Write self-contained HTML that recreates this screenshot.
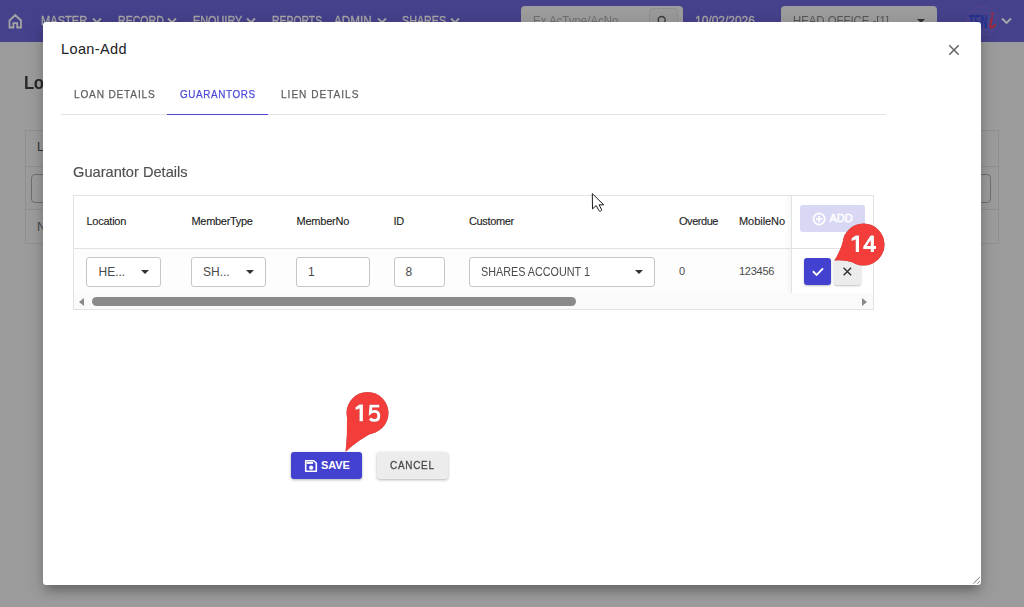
<!DOCTYPE html>
<html><head><meta charset="utf-8">
<style>
*{box-sizing:border-box;margin:0;padding:0}
html,body{width:1024px;height:607px;overflow:hidden;font-family:"Liberation Sans",sans-serif;background:#9b9b9b;position:relative}
div,span,svg{position:absolute}
.t{line-height:1;white-space:nowrap}
#hdr{left:0;top:0;width:1024px;height:42px;background:#45418b}
.menu{color:#a6a6a6;font-size:13px;top:14.2px;-webkit-text-stroke:.35px currentColor;transform-origin:0 0}
.chev{top:17px;width:10px;height:7px}
#modal{left:43px;top:22px;width:938px;height:563px;background:#fff;border-radius:3px;box-shadow:0 8px 10px -3px rgba(0,0,0,.25),0 4px 16px 1px rgba(0,0,0,.14)}
.tab{top:88.5px;font-size:11.5px;color:#5e5e5e;-webkit-text-stroke:.25px currentColor;transform-origin:0 0}
.hd{font-size:11px;color:#1e1e1e;top:215.6px;letter-spacing:-.25px;-webkit-text-stroke:.12px #1e1e1e}
.inp{border:1px solid #c6c6c6;border-radius:3px;height:29.5px;top:257px;background:#fff}
.it{font-size:12px;color:#4a4a4a;top:265.5px}
.caret{width:0;height:0;border-left:4px solid transparent;border-right:4px solid transparent;border-top:4px solid #333;top:270px}
.btn{border-radius:3px}
</style></head><body>
<!-- background page -->
<div id="hdr"></div>
<svg style="left:8px;top:13px" width="15" height="16" viewBox="0 0 15 16"><path d="M1.5 7.5 L7.2 2 L13 7.5 V14.5 H9.2 V10.2 H5.4 V14.5 H1.5 Z" fill="none" stroke="#a4a4a4" stroke-width="1.8" stroke-linejoin="miter"/></svg>
<div class="t menu" style="left:41.4px;transform:scaleX(.853)">MASTER</div>
<svg class="chev" style="left:92px" viewBox="0 0 10 7"><path d="M1 1.5 L5 5.5 L9 1.5" fill="none" stroke="#a6a6a6" stroke-width="1.8"/></svg>
<div class="t menu" style="left:117.7px;transform:scaleX(.815)">RECORD</div>
<svg class="chev" style="left:167px" viewBox="0 0 10 7"><path d="M1 1.5 L5 5.5 L9 1.5" fill="none" stroke="#a6a6a6" stroke-width="1.8"/></svg>
<div class="t menu" style="left:192.8px;transform:scaleX(.835)">ENQUIRY</div>
<svg class="chev" style="left:246px" viewBox="0 0 10 7"><path d="M1 1.5 L5 5.5 L9 1.5" fill="none" stroke="#a6a6a6" stroke-width="1.8"/></svg>
<div class="t menu" style="left:271.8px;transform:scaleX(.8)">REPORTS</div>
<div class="t menu" style="left:334.3px;transform:scaleX(.9)">ADMIN</div>
<svg class="chev" style="left:376.5px" viewBox="0 0 10 7"><path d="M1 1.5 L5 5.5 L9 1.5" fill="none" stroke="#a6a6a6" stroke-width="1.8"/></svg>
<div class="t menu" style="left:401.5px;transform:scaleX(.827)">SHARES</div>
<svg class="chev" style="left:450px" viewBox="0 0 10 7"><path d="M1 1.5 L5 5.5 L9 1.5" fill="none" stroke="#a6a6a6" stroke-width="1.8"/></svg>
<!-- search -->
<div style="left:521px;top:6px;width:162px;height:30px;background:#9c9c9c;border-radius:4px"></div>
<div class="t" style="left:532.5px;top:14.2px;font-size:13px;color:#6f6f6f;transform:scaleX(.883);transform-origin:0 0">Ex AcType/AcNo</div>
<div style="left:649.3px;top:7.6px;width:28.5px;height:26px;background:#999;border:1px solid #8e8e8e;border-radius:4px"></div>
<svg style="left:657px;top:13px" width="14" height="14" viewBox="0 0 14 14"><circle cx="4.7" cy="7" r="3.5" fill="none" stroke="#3a3a3a" stroke-width="1.4"/></svg>
<div class="t menu" style="left:695px;transform:scaleX(.921)">10/02/2026</div>
<div style="left:781px;top:6px;width:156px;height:30px;background:#9c9c9c;border-radius:4px"></div>
<div class="t" style="left:793.2px;top:14.2px;font-size:13px;color:#555;transform:scaleX(.874);transform-origin:0 0">HEAD OFFICE -[1]</div>
<div style="left:917px;top:19px;width:0;height:0;border-left:4px solid transparent;border-right:4px solid transparent;border-top:4px solid #333"></div>
<!-- logo -->
<svg style="left:966px;top:5px" width="32" height="32" viewBox="966 5 32 32">
<circle cx="982" cy="21" r="14.8" fill="none" stroke="#7a4a80" stroke-width=".6" opacity=".5"/>
<path d="M970 12 H994 M968.5 16 H995.5 M968 21 H996 M968.5 26 H995.5 M970 30 H994 M975 8 H989 M975 34 H989" stroke="#5e5ca4" stroke-width=".7" stroke-dasharray="1 .9" opacity=".7"/>
<text x="968.6" y="28.4" font-family="Liberation Sans" font-weight="bold" font-size="18.5" fill="#22308e" textLength="18.8" lengthAdjust="spacingAndGlyphs">TEN</text>
<circle cx="992.3" cy="14" r="1.3" fill="#ad262e"/>
<path d="M992.2 17.5 Q991 22 990.3 25.5 Q990 28.5 992 27.5 Q994 26.2 995 24.8" fill="none" stroke="#ad262e" stroke-width="1.7" stroke-linecap="round"/>
</svg>
<svg style="left:1001px;top:17px" width="11" height="8" viewBox="0 0 11 8"><path d="M1 1.5 L5.5 6 L10 1.5" fill="none" stroke="#a8a8a8" stroke-width="1.8"/></svg>

<div class="t" style="left:24.3px;top:72.8px;font-size:19px;font-weight:bold;color:#282828;letter-spacing:-.4px;transform:scaleX(.88);transform-origin:0 0">Lo</div>
<div style="left:24.5px;top:130px;width:974px;height:114px;border:1px solid #8f8f8f"></div>
<div style="left:25px;top:166px;width:973px;height:1px;background:#8f8f8f"></div>
<div style="left:25px;top:209px;width:973px;height:1px;background:#8f8f8f"></div>
<div style="left:31px;top:173.5px;width:960px;height:29px;border:1px solid #6e6e6e;border-radius:4px"></div>
<div class="t" style="left:37px;top:140.8px;font-size:12.5px;color:#333">L</div>
<div class="t" style="left:37px;top:220.8px;font-size:12.5px;color:#444">N</div>

<!-- modal -->
<div id="modal"></div>
<div class="t" style="left:61px;top:41.5px;font-size:14.5px;color:#212121;letter-spacing:.38px">Loan-Add</div>
<svg style="left:944.6px;top:41px" width="18" height="18" viewBox="0 0 24 24"><path d="M19 6.41L17.59 5 12 10.59 6.41 5 5 6.41 10.59 12 5 17.59 6.41 19 12 13.41 17.59 19 19 17.59 13.41 12z" fill="#666"/></svg>
<div class="t tab" style="left:73.5px;transform:scaleX(.88);letter-spacing:.92px">LOAN DETAILS</div>
<div class="t tab" style="left:179.5px;transform:scaleX(.86);letter-spacing:.72px;color:#4b49d6">GUARANTORS</div>
<div class="t tab" style="left:280.5px;transform:scaleX(.88);letter-spacing:1.1px">LIEN DETAILS</div>
<div style="left:61px;top:114px;width:825px;height:1px;background:#e2e2e2"></div>
<div style="left:167px;top:113.6px;width:101px;height:1.6px;background:#4744d2"></div>
<div class="t" style="left:73.3px;top:164px;font-size:15px;color:#4f4f4f;-webkit-text-stroke:.15px #4f4f4f;transform:scaleX(.975);transform-origin:0 0">Guarantor Details</div>

<!-- table -->
<div style="left:73px;top:195px;width:801px;height:115px;border:1px solid #e2e2e2"></div>
<div style="left:74px;top:248px;width:717px;height:1px;background:#e2e2e2"></div>
<div style="left:791px;top:248px;width:82px;height:1px;background:#e2e2e2"></div>
<div style="left:74px;top:249px;width:717px;height:44px;background:#fdfdfd"></div>
<div style="left:791px;top:196px;width:1px;height:97px;background:#e2e2e2"></div>
<div style="left:785px;top:196px;width:6px;height:97px;background:linear-gradient(to right,rgba(0,0,0,0),rgba(0,0,0,.03))"></div>
<div class="t hd" style="left:86.5px">Location</div>
<div class="t hd" style="left:191.5px;letter-spacing:-.3px">MemberType</div>
<div class="t hd" style="left:296.5px;letter-spacing:-.23px">MemberNo</div>
<div class="t hd" style="left:393.5px">ID</div>
<div class="t hd" style="left:469px;letter-spacing:-.35px">Customer</div>
<div class="t hd" style="left:679px;letter-spacing:-.45px">Overdue</div>
<div class="t hd" style="left:739px;letter-spacing:-.05px">MobileNo</div>

<div class="inp" style="left:86px;width:74.5px"></div>
<div class="t it" style="left:98.5px">HE...</div>
<div class="caret" style="left:141px"></div>
<div class="inp" style="left:191px;width:74.5px"></div>
<div class="t it" style="left:203px">SH...</div>
<div class="caret" style="left:246px"></div>
<div class="inp" style="left:296px;width:74px"></div>
<div class="t it" style="left:308px">1</div>
<div class="inp" style="left:394px;width:50.5px"></div>
<div class="t it" style="left:405.5px">8</div>
<div class="inp" style="left:469px;width:186px"></div>
<div class="t it" style="left:481px;transform:scaleX(.9);transform-origin:0 0">SHARES ACCOUNT 1</div>
<div class="caret" style="left:635px"></div>
<div class="t it" style="left:679px;font-size:11px;top:266px">0</div>
<div class="t it" style="left:739px;font-size:11px;top:266px;letter-spacing:-.25px">123456</div>

<!-- add button -->
<div class="btn" style="left:800px;top:205px;width:65px;height:27px;background:#d9d8f4"></div>
<svg style="left:811.5px;top:211.5px" width="14" height="14" viewBox="0 0 14 14"><circle cx="7.1" cy="7" r="5.6" fill="none" stroke="#fff" stroke-width="1.7"/><path d="M7.1 3.9 V10.1 M4 7 H10.2" stroke="#fff" stroke-width="1.6"/></svg>
<div class="t" style="left:829.4px;top:212.6px;font-size:11px;color:#fff;-webkit-text-stroke:.5px #fff;letter-spacing:.1px">ADD</div>
<!-- row buttons -->
<div class="btn" style="left:804px;top:258px;width:27px;height:27px;background:#4341d0;box-shadow:0 1px 2px rgba(0,0,0,.25)"></div>
<div class="btn" style="left:834px;top:258px;width:27px;height:27px;background:#ececec;box-shadow:0 1px 2px rgba(0,0,0,.25)"></div>
<svg style="left:800px;top:254px" width="66" height="36" viewBox="800 254 66 36"><path d="M812.9 271.3 L816.6 274.9 L823 268.3" fill="none" stroke="#fff" stroke-width="1.9"/><path d="M843.6 267.7 L851.1 275.2 M851.1 267.7 L843.6 275.2" stroke="#333" stroke-width="1.45"/></svg>


<!-- scrollbar -->
<div style="left:74px;top:293px;width:799px;height:16px;background:#fafafa"></div>
<div style="left:92px;top:297px;width:484px;height:9px;background:#8a8a8a;border-radius:5px"></div>
<div style="left:79px;top:297.5px;width:0;height:0;border-top:4.5px solid transparent;border-bottom:4.5px solid transparent;border-right:5px solid #8a8a8a"></div>
<div style="left:862px;top:297.5px;width:0;height:0;border-top:4.5px solid transparent;border-bottom:4.5px solid transparent;border-left:5px solid #8a8a8a"></div>

<!-- badge 14 -->
<svg style="left:825px;top:215px;filter:drop-shadow(.8px .8px .5px rgba(0,0,0,.45))" width="70" height="60" viewBox="825 215 70 60">
<path d="M834.5 260.5 Q842 248 845 234 L855 263 Q845 259.5 834.5 260.5 Z" fill="#f23d3b"/>
<circle cx="863.5" cy="244.5" r="21" fill="#f23d3b"/>
</svg>
<svg style="left:845px;top:230px;filter:drop-shadow(.4px .9px .5px rgba(0,0,0,.4))" width="36" height="26" viewBox="845 230 36 26"><path d="M855.7 235.4 H859 V252 H855.7 V239.4 L851.6 240.9 V238.2 Z" fill="#fff"/><path d="M870.6 235.4 H873.9 V246 H876 V249 H873.9 V252 H870.7 V249 H863.2 V246.7 Z M870.7 240.2 L866.8 246 H870.7 Z" fill="#fff" fill-rule="evenodd"/></svg>

<!-- save / cancel -->
<div class="btn" style="left:291px;top:452px;width:71px;height:27px;background:#4341d0;box-shadow:0 1px 3px rgba(0,0,0,.3)"></div>
<svg style="left:303.6px;top:458.6px" width="14" height="14" viewBox="0 0 14 14"><path d="M1.7 1.7 H9.8 L12.3 4.2 V12.3 H1.7 Z" fill="none" stroke="#fff" stroke-width="1.6" stroke-linejoin="round"/><rect x="2.5" y="3" width="6.6" height="1.9" fill="#fff"/><circle cx="7.2" cy="8.7" r="2.1" fill="#fff"/></svg>
<div class="t" style="left:321px;top:460px;font-size:11px;font-weight:bold;color:#fff;letter-spacing:-.13px">SAVE</div>
<div class="btn" style="left:376.5px;top:452px;width:71px;height:27px;background:#ececec;box-shadow:0 1px 3px rgba(0,0,0,.3)"></div>
<div class="t" style="left:389.8px;top:460.1px;font-size:11px;color:#484848;-webkit-text-stroke:.3px #484848;transform:scaleX(.9);transform-origin:0 0;letter-spacing:.85px">CANCEL</div>

<!-- badge 15 -->
<svg style="left:335px;top:385px;filter:drop-shadow(.8px .8px .5px rgba(0,0,0,.45))" width="65" height="70" viewBox="335 385 65 70">
<path d="M345.6 451.7 Q347.5 435 347 418 L374 432 Q358 440 345.6 451.7 Z" fill="#f23d3b"/>
<circle cx="367.5" cy="413" r="21" fill="#f23d3b"/>
</svg>
<svg style="left:350px;top:400px;filter:drop-shadow(.4px .9px .5px rgba(0,0,0,.4))" width="36" height="26" viewBox="350 400 36 26"><path d="M359.5 404.5 H362.9 V421.3 H359.5 V408.6 L355.6 409.9 V407.2 Z" fill="#fff"/><path d="M379.3 406.1 H370.9 L370.4 412.6 C371.3 411.8 372.6 411.4 374.4 411.4 C377.2 411.4 378.8 413.3 378.8 415.9 C378.8 418.6 377 420.4 374.3 420.4 C372.2 420.4 370.9 419.6 369.9 418.6" fill="none" stroke="#fff" stroke-width="2.9"/></svg>

<!-- resize handle -->
<svg style="left:970px;top:574px" width="12" height="12" viewBox="970 574 12 12"><path d="M973.3 583.5 L979.8 577.1 M977.2 583.5 L979.8 581" stroke="#666" stroke-width=".9"/></svg>

<!-- cursor -->
<svg style="left:588px;top:190px" width="20" height="26" viewBox="588 190 20 26"><path d="M592.3 193.6 L592.5 208.9 L596.2 205.6 L598.9 210.5 Q599.6 211.5 600.8 211.1 Q601.9 210.5 601.5 209.5 L599.1 204.8 L603.7 204.8 Z" fill="#fff" stroke="#1a1a1a" stroke-width="1" stroke-linejoin="round"/></svg>
</body></html>
